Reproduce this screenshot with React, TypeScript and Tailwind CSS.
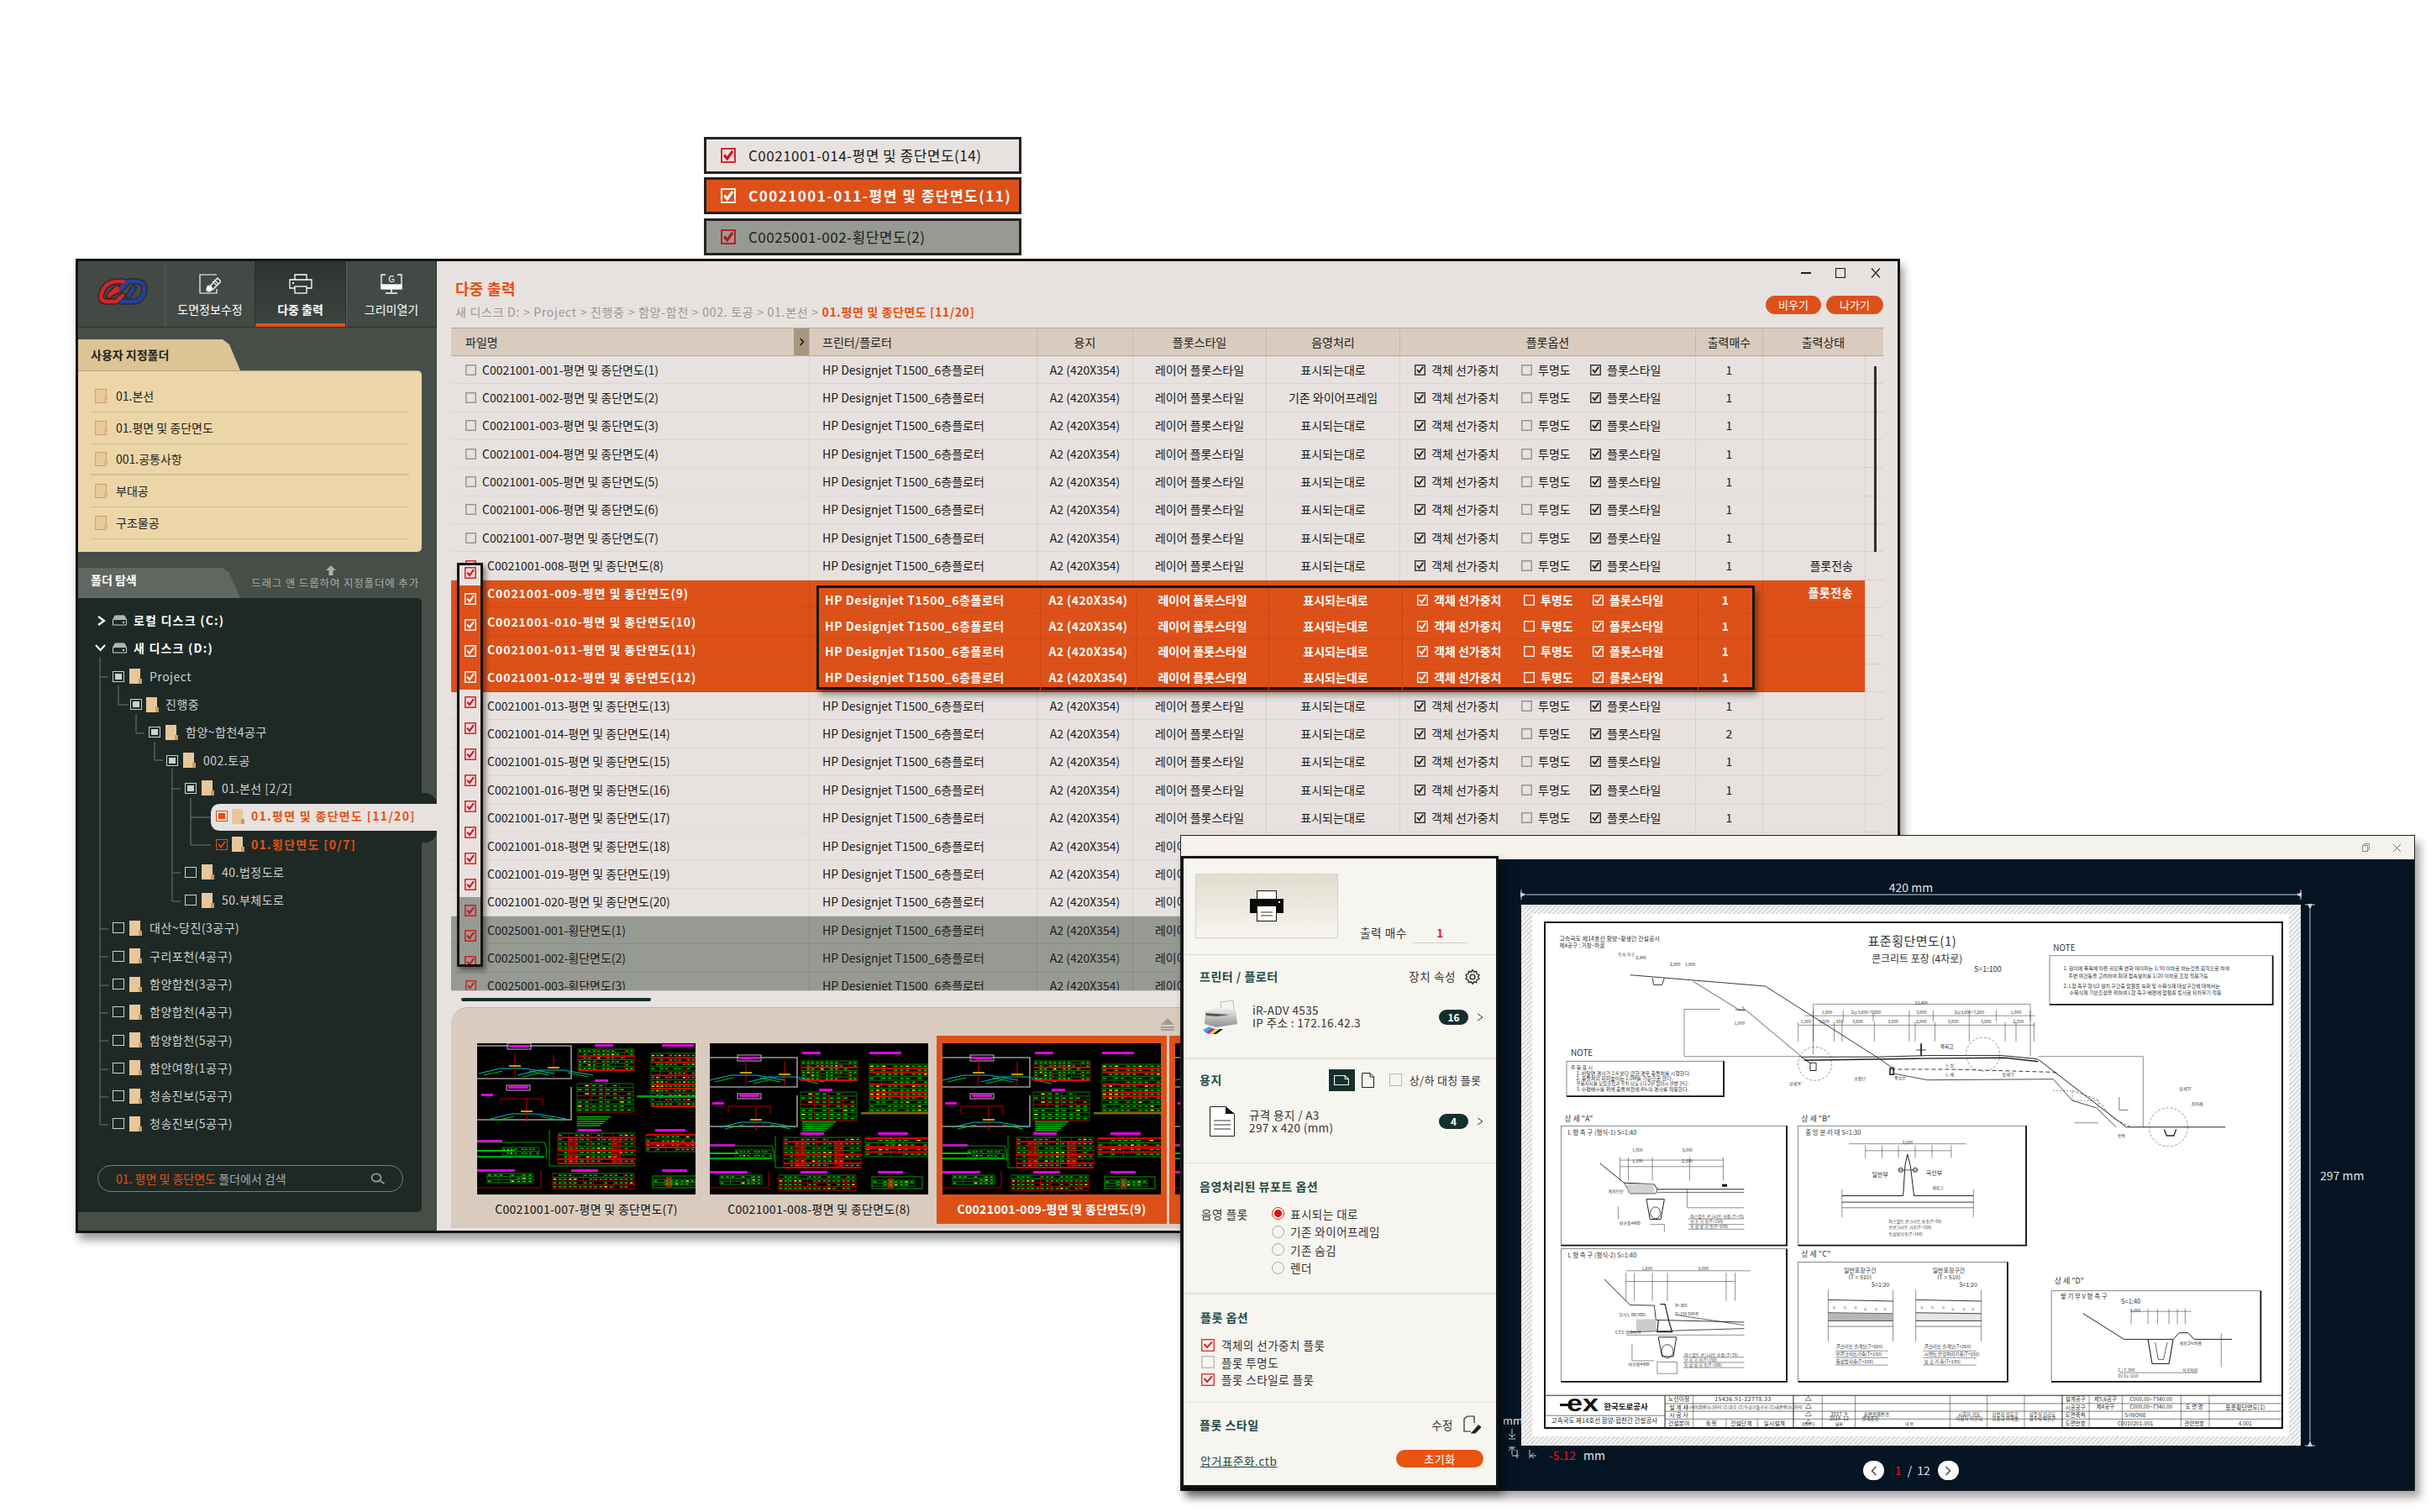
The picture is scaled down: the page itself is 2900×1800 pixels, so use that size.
import React from 'react';

const ORANGE = 'bg-[#dd5119]';

const pad3 = (n: number) => String(n).padStart(3, '0');
const rows = [
  ...Array.from({ length: 20 }, (_, i) => `C0021001-${pad3(i + 1)}-평면 및 종단면도(${i + 1})`),
  ...Array.from({ length: 3 }, (_, i) => `C0025001-${pad3(i + 1)}-횡단면도(${i + 1})`),
];

function Box({ on, color = '#222', off = '#8e8a86', size = 13, fill = 'none', sw = 1.5 }: { on?: boolean; color?: string; off?: string; size?: number; fill?: string; sw?: number }) {
  return (
    <svg width={size} height={size} viewBox="0 0 13 13" className="shrink-0">
      <rect x="0.75" y="0.75" width="11.5" height="11.5" fill={fill} stroke={on ? color : off} strokeWidth="1.3" />
      {on && <path d="M3 6.2 L5.6 9.3 L10.2 2.8" fill="none" stroke={color} strokeWidth={sw + 0.4} />}
    </svg>
  );
}

function Opts({ color, off, bold }: { color: string; off: string; bold?: boolean }) {
  return (
    <div className={`flex items-center ${bold ? 'font-bold' : ''}`}>
      <span className="flex w-[127px] items-center gap-[7px]"><Box on color={color} off={off} />객체 선가중치</span>
      <span className="flex w-[82px] items-center gap-[7px]"><Box color={color} off={off} />투명도</span>
      <span className="flex items-center gap-[7px]"><Box on color={color} off={off} />플롯스타일</span>
    </div>
  );
}

function TableRow({ i, name }: { i: number; name: string }) {
  const orange = i >= 8 && i <= 11;
  const grey = i >= 20;
  const underPreview = i >= 17;
  const bg = orange ? `${ORANGE} text-white border-[#cc4a15]` : grey ? 'bg-[#979a93] text-[#1a1a1a] border-[#8a8d86]' : 'text-[#1a1a1a] border-[#dad5d1]';
  const line = orange ? 'border-[#cc4a15]' : grey ? 'border-[#888b85]' : 'border-[#d6d0cb]';
  const shade = i === 1 ? '기존 와이어프레임' : '표시되는대로';
  const checked = i >= 7;
  return (
    <div className="flex h-[33.35px] items-center text-[14px]">
      <div className={`flex h-full w-[1683px] items-center border-b ${bg}`}>
        <div className={`flex h-full w-[426px] items-center pl-[17px] ${i >= 7 ? 'gap-[13px]' : 'gap-[7px]'} ${orange ? 'font-bold tracking-[0.9px]' : ''}`}>
          <Box on={checked} color="#d3121a" off="#8e8a86" />
          <span className="whitespace-nowrap">{name}</span>
        </div>
        <div className={`flex h-full w-[271px] items-center border-l pl-[15px] whitespace-nowrap ${line}`}>{!orange && 'HP Designjet T1500_6층플로터'}</div>
        <div className={`flex h-full w-[114px] items-center justify-center border-l ${line}`}>{!orange && 'A2 (420X354)'}</div>
        <div className={`flex h-full w-[159px] items-center justify-center border-l whitespace-nowrap ${line}`}>{!orange && '레이어 플롯스타일'}</div>
        <div className={`flex h-full w-[159px] items-center justify-center border-l ${line}`}>{!orange && !underPreview && shade}</div>
        <div className={`flex h-full w-[352px] items-center border-l pl-[17px] ${line}`}>{!orange && !underPreview && <Opts color="#222" off="#8e8a86" />}</div>
        <div className={`flex h-full w-[80px] items-center justify-center border-l ${line}`}>{!orange && !underPreview && (i === 13 ? 2 : 1)}</div>
        <div className={`flex h-full flex-1 items-center justify-end border-l pr-[14px] ${line}`}>
          {(i === 7 || i === 8) && <span className={i === 8 ? '-translate-y-[1px] font-bold tracking-[0.5px]' : ''}>플롯전송</span>}
        </div>
      </div>
      <div className="h-full flex-1 border-b border-l border-[#d6d0cb]" />
    </div>
  );
}

function Header() {
  const c = 'flex h-full items-center justify-center border-l border-[#c6b9ab]';
  return (
    <div className="flex h-[34px] items-center border-y border-[#b3a799] bg-[#d9ccbf] text-[14px] text-[#222]">
      <div className="flex h-full w-[426px] items-center justify-between pl-[17px]">
        <span>파일명</span>
        <span className="flex h-full w-[18px] items-center justify-center bg-[#a8967f]">
          <svg width="7" height="10" viewBox="0 0 7 10"><path d="M1.5 1 L5.5 5 L1.5 9" fill="none" stroke="#111" strokeWidth="1.5" /></svg>
        </span>
      </div>
      <div className={`${c} w-[271px] !justify-start pl-[15px]`}>프린터/플로터</div>
      <div className={`${c} w-[114px]`}>용지</div>
      <div className={`${c} w-[159px]`}>플롯스타일</div>
      <div className={`${c} w-[159px]`}>음영처리</div>
      <div className={`${c} w-[352px]`}>플롯옵션</div>
      <div className={`${c} w-[80px]`}>출력매수</div>
      <div className={`${c} flex-1`}>출력상태</div>
    </div>
  );
}

/* ---------- thumbnails ---------- */
function rnd(seed: number) {
  let s = seed;
  return () => {
    s = (s * 9301 + 49297) % 233280;
    return s / 233280;
  };
}
function Tbl({ x, y, w, h, cols, rws, seed, red = 0.3, thick }: { x: number; y: number; w: number; h: number; cols: number; rws: number; seed: number; red?: number; thick?: boolean }) {
  const r = rnd(seed);
  const els: React.ReactNode[] = [];
  for (let j = 0; j <= rws; j++) {
    const yy = y + (h * j) / rws;
    const isRed = r() < red;
    els.push(<line key={`h${j}`} x1={x} x2={x + w} y1={yy} y2={yy} stroke={isRed ? '#e00000' : '#00a800'} strokeWidth={isRed && thick ? 2 : 0.8} />);
    if (j < rws) {
      for (let k = 0; k < cols; k++) {
        const xx = x + (w * k) / cols + 1;
        if (r() < 0.72) els.push(<rect key={`d${j}-${k}`} x={xx} y={yy + (h / rws) * 0.35} width={(w / cols) * 0.55} height={1.4} fill={r() < 0.12 ? '#ffff00' : '#00e000'} />);
      }
    }
  }
  for (let k = 0; k <= cols; k += 2) {
    const xx = x + (w * k) / cols;
    els.push(<line key={`v${k}`} x1={xx} x2={xx} y1={y} y2={y + h} stroke={r() < red ? '#d00000' : '#008800'} strokeWidth={0.8} />);
  }
  return <g>{els}</g>;
}
function Mag({ x, y, w }: { x: number; y: number; w: number }) {
  return <rect x={x} y={y} width={w} height={3} fill="#e400e4" />;
}
function Section({ x, y }: { x: number; y: number }) {
  return (
    <g fill="none" strokeWidth="1">
      <path d={`M${x} ${y + 8} L${x + 25} ${y + 2} L${x + 55} ${y + 2} L${x + 90} ${y + 8}`} stroke="#00bcd4" />
      <path d={`M${x + 6} ${y + 10} L${x + 28} ${y + 5} M${x + 60} ${y + 5} L${x + 84} ${y + 10}`} stroke="#00c800" />
      <path d={`M${x + 43} ${y - 16} V${y + 12}`} stroke="#d00000" />
      <rect x={x + 36} y={y - 2} width={14} height={2} fill="#c8a000" stroke="none" />
    </g>
  );
}
function Thumb({ v }: { v: 0 | 1 }) {
  const a = v === 0;
  return (
    <svg width="260" height="180" viewBox="0 0 260 180" className="block shrink-0 bg-black">
      <path d={a ? 'M0 3 H112 V42 H0' : 'M0 17 H104 V52 H0'} fill="none" stroke="#9a9a9a" strokeWidth="1.6" />
      <rect x={a ? 36 : 33} y={a ? 0 : 14} width="28" height="7" fill="none" stroke="#bbb" />
      <Mag x={a ? 38 : 35} y={a ? 2 : 16} w={24} />
      <Section x={a ? 2 : 0} y={a ? 28 : 36} />
      <Section x={a ? 48 : 46} y={a ? 30 : 38} />
      <Mag x={a ? 140 : 110} y={a ? 1 : 10} w={22} />
      <Tbl x={a ? 120 : 109} y={a ? 7 : 21} w={67} h={a ? 25 : 23} cols={12} rws={6} seed={3} thick />
      <Mag x={a ? 220 : 190} y={a ? 1 : 10} w={38} />
      <Tbl x={a ? 207 : 190} y={a ? 12 : 25} w={a ? 53 : 71} h={a ? 63 : 57} cols={10} rws={12} seed={7} red={0.35} thick />
      <rect x={a ? 190 : 180} y={a ? 62 : 82} width="80" height="2.5" fill={a ? '#00a000' : '#707000'} />
      <Mag x={a ? 140 : 130} y={a ? 43 : 54} w={16} />
      <Tbl x={a ? 119 : 108} y={a ? 48 : 58} w={67} h={34} cols={8} rws={7} seed={11} red={0.4} />
      {[0, 1, 2, 3, 4].map((n) => <rect key={n} x={a ? 119 : 110} y={(a ? 87 : 93) + n * 2.6} width={40 - n * 3} height={1.4} fill="#00c000" />)}
      <path d={a ? 'M112 52 V91 H0' : 'M104 62 V99 H0'} fill="none" stroke="#9a9a9a" strokeWidth="1.6" />
      <rect x={a ? 35 : 33} y={a ? 50 : 60} width="28" height="6" fill="none" stroke="#bbb" />
      <Mag x={a ? 37 : 35} y={a ? 51 : 61} w={24} />
      <Mag x={a ? 5 : 3} y={a ? 60 : 70} w={14} />
      <path d={a ? 'M28 72 V66 H78 V75' : 'M22 83 V75 H72 V84'} fill="none" stroke="#b00000" />
      <Section x={a ? 16 : 12} y={a ? 82 : 92} />
      <Mag x={a ? 120 : 108} y={a ? 102 : 106} w={28} />
      <path d={a ? 'M86 103 V146 H189' : 'M78 110 V148 H173'} fill="none" stroke="#00a000" />
      <Tbl x={a ? 96 : 88} y={a ? 107 : 112} w={92} h={36} cols={14} rws={7} seed={19} red={0.5} thick />
      <rect x={a ? 108 : 102} y={a ? 112 : 116} width="12" height="32" fill="#e00000" opacity="0.55" />
      <rect x={a ? 160 : 148} y={a ? 112 : 116} width="12" height="32" fill="#e00000" opacity="0.55" />
      <Mag x={a ? 212 : 200} y={a ? 102 : 106} w={36} />
      <Tbl x={a ? 201 : 185} y={a ? 109 : 113} w={a ? 59 : 76} h={a ? 20 : 22} cols={10} rws={4} seed={23} red={0.5} thick />
      <rect x={a ? 201 : 185} y={a ? 117 : 122} width="76" height="4" fill="#e00000" opacity="0.8" />
      <Mag x={0} y={a ? 115 : 120} w={30} />
      <path d={a ? 'M0 118 H80 Q84 125 82 137' : 'M0 122 H74 Q78 130 76 140'} fill="none" stroke="#009000" strokeWidth="1.2" />
      <rect x="0" y={a ? 134 : 136} width={a ? 80 : 74} height="2.4" fill="#00a000" />
      <rect x="0" y={a ? 127 : 130} width={a ? 45 : 34} height="2" fill="#00c000" />
      <Tbl x={30} y={a ? 124 : 127} w={44} h={9} cols={10} rws={2} seed={31} red={0} />
      <Mag x={0} y={a ? 150 : 152} w={45} />
      <path d={a ? 'M0 172 H76 V151' : 'M0 172 H70 V152'} fill="none" stroke="#b00000" />
      <Tbl x={12} y={a ? 155 : 157} w={a ? 55 : 50} h={11} cols={8} rws={3} seed={37} red={0} />
      <Mag x={a ? 112 : 108} y={a ? 150 : 152} w={32} />
      <Tbl x={a ? 90 : 82} y={a ? 155 : 157} w={a ? 97 : 92} h={18} cols={16} rws={4} seed={41} red={0.4} />
      <Mag x={a ? 220 : 200} y={a ? 150 : 152} w={30} />
      <rect x={a ? 209 : 193} y={a ? 158 : 159} width="60" height="14" fill="none" stroke="#00a000" />
      <rect x={a ? 225 : 212} y={a ? 159 : 161} width="7" height="12" fill="#c00000" />
      <Tbl x={a ? 210 : 194} y={a ? 162 : 163} w={50} h={7} cols={8} rws={2} seed={43} red={0} />
    </svg>
  );
}

function Card({ label, sel, v }: { label?: string; sel?: boolean; v: 0 | 1 }) {
  return (
    <div className={`flex h-[224px] w-[274px] shrink-0 flex-col items-center pt-[9px] ${sel ? `${ORANGE} font-bold text-white` : 'text-[#111]'}`}>
      <Thumb v={v} />
      <div className="mt-[2px] flex h-[30px] items-center whitespace-nowrap text-[14px] tracking-[0.3px]">{label}</div>
    </div>
  );
}

/* ---------- sidebar ---------- */
function UserFolder() {
  return (
    <svg width="15" height="17" viewBox="0 0 15 17" className="shrink-0">
      <rect x="0.5" y="0.5" width="13" height="16" fill="#e8c99b" stroke="#cf9f6c" />
      <rect x="12" y="11" width="3" height="6" fill="#e8c99b" stroke="#cf9f6c" strokeWidth="0.8" />
    </svg>
  );
}
function TreeFolder() {
  return (
    <svg width="15" height="18" viewBox="0 0 15 18" className="shrink-0">
      <rect x="0" y="0" width="13" height="18" fill="#e7c79a" />
      <rect x="11" y="12" width="4" height="6" fill="#c99a62" />
    </svg>
  );
}
function TreeBox({ mode, orange }: { mode: 'partial' | 'none' | 'check'; orange?: boolean }) {
  const c = orange ? '#e8500f' : '#c9d2ce';
  return (
    <svg width="14" height="13" viewBox="0 0 14 13" className="shrink-0">
      <rect x="0.5" y="0.5" width="13" height="12" fill="none" stroke={c} strokeWidth="1" />
      {mode === 'partial' && <rect x="3" y="3" width="8" height="7" fill={c} />}
      {mode === 'check' && <path d="M3 6 L6 9.5 L11 3" fill="none" stroke={c} strokeWidth="1.6" />}
    </svg>
  );
}
const tree: { pl: string; gap: string; label: string; mode: 'partial' | 'none' | 'check'; orange?: boolean }[] = [
  { pl: 'pl-[41px]', gap: 'gap-[6px]', label: 'Project', mode: 'partial' },
  { pl: 'pl-[62px]', gap: 'gap-[5px]', label: '진행중', mode: 'partial' },
  { pl: 'pl-[84px]', gap: 'gap-[6px]', label: '함양~합천4공구', mode: 'partial' },
  { pl: 'pl-[105px]', gap: 'gap-[6px]', label: '002.토공', mode: 'partial' },
  { pl: 'pl-[127px]', gap: 'gap-[6px]', label: '01.본선 [2/2]', mode: 'partial' },
  { pl: 'pl-[164px]', gap: 'gap-[5px]', label: '01.평면 및 종단면도 [11/20]', mode: 'partial', orange: true },
  { pl: 'pl-[164px]', gap: 'gap-[5px]', label: '01.횡단면도 [0/7]', mode: 'check', orange: true },
  { pl: 'pl-[127px]', gap: 'gap-[6px]', label: '40.법정도로', mode: 'none' },
  { pl: 'pl-[127px]', gap: 'gap-[6px]', label: '50.부체도로', mode: 'none' },
  { pl: 'pl-[41px]', gap: 'gap-[6px]', label: '대산~당진(3공구)', mode: 'none' },
  { pl: 'pl-[41px]', gap: 'gap-[6px]', label: '구리포천(4공구)', mode: 'none' },
  { pl: 'pl-[41px]', gap: 'gap-[6px]', label: '함양합천(3공구)', mode: 'none' },
  { pl: 'pl-[41px]', gap: 'gap-[6px]', label: '함양합천(4공구)', mode: 'none' },
  { pl: 'pl-[41px]', gap: 'gap-[6px]', label: '함양합천(5공구)', mode: 'none' },
  { pl: 'pl-[41px]', gap: 'gap-[6px]', label: '함안여항(1공구)', mode: 'none' },
  { pl: 'pl-[41px]', gap: 'gap-[6px]', label: '청송진보(5공구)', mode: 'none' },
  { pl: 'pl-[41px]', gap: 'gap-[6px]', label: '청송진보(5공구)', mode: 'none' },
];

function Disk() {
  return (
    <svg width="17" height="13" viewBox="0 0 17 13" className="shrink-0">
      <path d="M3 1 H14 L16.5 6 V12 H0.5 V6 Z" fill="none" stroke="#cfd5d2" strokeWidth="1" />
      <path d="M3 1 H14 L16.5 6 H0.5 Z" fill="#aeb5b1" />
      <rect x="12" y="8" width="2" height="2" fill="#cfd5d2" />
    </svg>
  );
}

function Logo() {
  return (
    <svg width="62" height="34" viewBox="0 0 62 34">
      <g fill="none" strokeLinecap="round" strokeLinejoin="round">
        <path d="M24 13 L15 22 M31 22 L23 29 H12 Q3 29 6 19 Q10 6 24 5 H31 Q35 6 32 10 L27 15 L19 19" stroke="#2a2a2a" strokeWidth="7.5" />
        <path d="M29 29 H44 Q55 28 57 16 Q58 5 47 5 H38 L29 14 M44 13 L38 22" stroke="#2a2a2a" strokeWidth="7.5" />
        <path d="M24 13 L15 22 M31 22 L23 29 H12 Q3 29 6 19 Q10 6 24 5 H31 Q35 6 32 10 L27 15 L19 19" stroke="#d8232a" strokeWidth="4.6" />
        <path d="M29 29 H44 Q55 28 57 16 Q58 5 47 5 H38 L29 14 M44 13 L38 22" stroke="#24409c" strokeWidth="4.6" />
      </g>
    </svg>
  );
}

function NavTab({ label, active, children }: { label: string; active?: boolean; children: React.ReactNode }) {
  return (
    <div className={`relative flex w-[108px] flex-col items-center border-r border-[#2a2f2c] pt-[14px] ${active ? 'bg-gradient-to-b from-[#2c3330] to-[#3d4541] font-bold' : 'bg-[#434a46] border-l border-l-[#5a615c]'}`}>
      <div className="flex h-[26px] items-center justify-center">{children}</div>
      <div className="mt-[8px] text-[14px] leading-[18px] text-white">{label}</div>
      {active && <div className="absolute bottom-0 left-0 h-[4px] w-full bg-[#dd5119]" />}
    </div>
  );
}

function Sidebar() {
  return (
    <div className="flex w-[427px] shrink-0 flex-col bg-[#474d47]">
      <div className="flex h-[79px] border-b border-[#2e332f]">
        <div className="flex w-[103px] items-center justify-center bg-[#434a46] pb-[6px] pl-[2px]"><Logo /></div>
        <NavTab label="도면정보수정">
          <svg width="26" height="24" viewBox="0 0 26 24" fill="none" stroke="#fff" strokeWidth="1.2">
            <path d="M21 1 H1 V23 H21 V18" />
            <path d="M12 16 L22 5 L26 9 L16 19 Z" strokeWidth="1.3" />
            <path d="M10 15 Q13 13 15 16 Q16 20 12 21 Q9 21 9 18 Z" fill="#fff" />
            <path d="M16 9 L21 14 M18 7 L23 12" />
          </svg>
        </NavTab>
        <NavTab label="다중 출력" active>
          <svg width="28" height="24" viewBox="0 0 28 24" fill="none" stroke="#fff" strokeWidth="1.3">
            <path d="M7 7 V1 H21 V7" />
            <path d="M7 17 H1 V7 H27 V17 H21" />
            <rect x="7" y="15" width="14" height="8" />
            <rect x="4" y="10" width="2" height="2" fill="#fff" stroke="none" />
          </svg>
        </NavTab>
        <NavTab label="그리미열기">
          <svg width="26" height="24" viewBox="0 0 26 24" fill="none" stroke="#fff" strokeWidth="1.3">
            <path d="M6 1 H1 V17 H25 V1 H20" />
            <rect x="1" y="13" width="24" height="5" fill="#fff" />
            <path d="M13 18 V22 M6 23 H20" strokeWidth="1.5" />
            <text x="13" y="10" textAnchor="middle" fontSize="11" fill="#fff" stroke="none">G</text>
          </svg>
        </NavTab>
      </div>
      <div className="mt-[14px] flex h-[37px] w-[193px] items-center bg-[#dcc595] pl-[15px] text-[14px] font-bold text-[#222] [clip-path:polygon(0_0,172px_0,180px_6px,193px_100%,0_100%)]">사용자 지정폴더</div>
      <div className="mr-[18px] flex h-[216px] flex-col rounded-r-[5px] border-t border-[#b4a585] bg-[#ecd6a8] px-[15px] pt-[11px]">
        {['01.본선', '01.평면 및 종단면도', '001.공통사항', '부대공', '구조물공'].map((t, i) => (
          <div key={t} className={`flex h-[37.8px] items-center gap-[10px] border-[#d3bd92] pl-[5px] text-[14px] text-[#222] ${i === 2 ? 'border-b-2' : 'border-b'}`}>
            <UserFolder />
            <span>{t}</span>
          </div>
        ))}
      </div>
      <div className="mt-[19px] flex h-[36px]">
        <div className="flex h-[36px] w-[193px] items-center bg-[#606761] pb-[8px] pl-[15px] text-[14px] font-bold text-white [clip-path:polygon(0_0,172px_0,180px_6px,193px_100%,0_100%)]">폴더 탐색</div>
        <div className="flex w-[216px] -translate-y-[3px] flex-col items-end pr-[3px] text-[12.5px] leading-[15px] tracking-[0.85px] text-[#a9aeaa]">
          <svg width="12" height="12" viewBox="0 0 12 12" className="mr-[99px] mb-[1px]"><path d="M6 0 L12 6 H8.5 V12 H3.5 V6 H0 Z" fill="#a9aeaa" /></svg>
          <span className="whitespace-nowrap">드래그 앤 드롭하여 지정폴더에 추가</span>
        </div>
      </div>
      <div className="relative mr-[18px] h-[731px] rounded-r-[5px] bg-[#1e2926] pt-[10px] text-[14px]">
        <div className="absolute top-[232px] left-[400px] h-[59px] w-[27px] rounded-r-[14px] bg-[#1e2926]" />
        <div className="absolute top-[245px] left-[158px] h-[32px] w-[269px] rounded-l-[10px] bg-[#e7e2df]" />
        <svg className="absolute top-0 left-0" width="409" height="731" fill="none" stroke="#6d7672" strokeWidth="1">
          <path d="M26 70 V627 H36 M26 94 H36 M26 394 H36 M26 427 H36 M26 461 H36 M26 494 H36 M26 527 H36 M26 561 H36 M26 594 H36" />
          <path d="M48 104 V127 H60 M69 138 V161 H79 M91 171 V193 H101" />
          <path d="M112 203 V361 H122 M112 227 H122 M112 327 H122 M134 238 V294 H158 M134 261 H158" />
        </svg>
        <div className="relative flex h-[33.3px] items-center gap-[8px] pl-[22px] font-bold text-white">
          <svg width="11" height="12" viewBox="0 0 11 12"><path d="M2 1 L9 6 L2 11" fill="none" stroke="#fff" strokeWidth="2.2" /></svg>
          <Disk />
          <span className="tracking-[1.2px]">로컬 디스크 (C:)</span>
        </div>
        <div className="relative flex h-[33.3px] items-center gap-[8px] pl-[20px] font-bold text-white">
          <svg width="13" height="9" viewBox="0 0 13 9"><path d="M1 1 L6.5 7 L12 1" fill="none" stroke="#fff" strokeWidth="2" /></svg>
          <Disk />
          <span className="tracking-[1.2px]">새 디스크 (D:)</span>
        </div>
        {tree.map((t, i) => (
          <div key={i} className={`relative flex h-[33.3px] items-center ${t.pl} ${t.gap}`}>
            <TreeBox mode={t.mode} orange={t.orange} />
            <TreeFolder />
            <span className={`ml-[3px] whitespace-nowrap ${t.orange ? 'font-bold tracking-[1.3px] text-[#e8500f]' : 'tracking-[0.5px] text-[#cdd2cf]'}`}>{t.label}</span>
          </div>
        ))}
        <div className="absolute top-[675px] left-[23px] flex h-[32px] w-[364px] items-center justify-between rounded-full border border-[#75807c] pr-[20px] pl-[21px] text-[14px]">
          <span><span className="text-[#e8500f]">01. 평면 및 종단면도</span> <span className="text-[#a6aca9]">폴더에서 검색</span></span>
          <svg width="18" height="14" viewBox="0 0 18 14" fill="none" stroke="#8f9794" strokeWidth="1.8"><ellipse cx="7" cy="6" rx="5.5" ry="4.6" /><path d="M11 9.5 L16.5 13" /></svg>
        </div>
      </div>
    </div>
  );
}

/* ---------- main content ---------- */
function WinCtl({ cls = '' }: { cls?: string }) {
  return (
    <div className={`flex items-center ${cls}`}>
      <svg width="12" height="12" viewBox="0 0 12 12"><rect x="0" y="5" width="12" height="2" fill="#222" /></svg>
      <svg className="ml-[29px]" width="12" height="12" viewBox="0 0 12 12"><rect x="0.5" y="0.5" width="11" height="11" fill="none" stroke="#222" strokeWidth="1.2" /></svg>
      <svg className="ml-[30px]" width="12" height="12" viewBox="0 0 12 12"><path d="M1 0.5 L11 11.5 M11 0.5 L1 11.5" stroke="#222" strokeWidth="1.2" /></svg>
    </div>
  );
}

function Main() {
  return (
    <div className="relative flex flex-1 flex-col bg-[#e7e2df] pr-[17px] pl-[17px]">
      <div className="flex h-[79px]">
        <div className="flex flex-col pl-[5px]">
          <div className="pt-[21px] text-[18px] leading-[22px] font-bold tracking-[0.3px] text-[#e8500f]">다중 출력</div>
          <div className="mt-[7px] text-[14px] tracking-[0.72px] whitespace-nowrap text-[#9b9692]">새 디스크 D: &gt; Project &gt; 진행중 &gt; 함양-합천 &gt; 002. 토공 &gt; 01.본선 &gt; <span className="font-bold tracking-[0.6px] text-[#e8500f]">01.평면 및 종단면도 [11/20]</span></div>
        </div>
        <div className="ml-auto flex flex-col items-end">
          <WinCtl cls="mt-[8px] mr-[3px]" />
          <div className="mt-[21px] flex gap-[6px] text-[13px] text-white">
            <span className="flex h-[22px] w-[66px] items-center justify-center rounded-full bg-[#dd5119]">비우기</span>
            <span className="flex h-[22px] w-[68px] items-center justify-center rounded-full bg-[#dd5119]">나가기</span>
          </div>
        </div>
      </div>
      <div className="relative h-[789px] overflow-hidden">
        <Header />
        {rows.map((n, i) => <TableRow key={n} i={i} name={n} />)}
        <div className="absolute top-[46px] right-[8px] h-[221px] w-[3px] bg-[#2f2f2f]" />
      </div>
      <div className="flex h-[20px] items-center border-t border-[#cfc9c4] bg-[#e7e2df] pl-[12px]">
        <div className="h-[4px] w-[226px] rounded-full bg-[#14302c]" />
      </div>
      <div className="relative mb-[3px] flex flex-1 gap-[3px] overflow-hidden rounded-tl-[20px] border-t border-[#bdb5ac] bg-[#d9ccbf] pt-[33px] pl-[24px]">
        <Card label="C0021001-007-평면 및 종단면도(7)" v={0} />
        <Card label="C0021001-008-평면 및 종단면도(8)" v={1} />
        <Card label="C0021001-009-평면 및 종단면도(9)" v={1} sel />
        <Card v={1} sel />
        <svg className="absolute top-[12px] left-[845px]" width="16" height="15" viewBox="0 0 16 15"><path d="M8 0 L16 8 H0 Z M0 10 H16 V12 H0 Z M0 13 H16 V15 H0 Z" fill="#a29c94" /></svg>
      </div>
    </div>
  );
}

function Strip({ cls, text, boxColor, txt }: { cls: string; text: string; boxColor: string; txt: string }) {
  return (
    <div className={`absolute left-[838px] flex h-[44px] w-[378px] items-center gap-[15px] border-[3px] pl-[17px] text-[17px] whitespace-nowrap ${cls} ${txt}`}>
      <Box on color={boxColor} size={18} sw={2} />
      <span>{text}</span>
    </div>
  );
}

function CheckColumn() {
  const band = (i: number) => (i === 0 ? 'h-[24px] items-start pt-[2px] bg-[#e7e2df]' : i <= 4 ? `h-[31px] items-center ${ORANGE}` : i <= 12 ? 'h-[30.9px] items-center bg-[#e7e2df]' : 'h-[30.9px] items-center bg-[#979a93]');
  return (
    <div className="absolute top-[670px] left-[544px] h-[481px] w-[31px] overflow-hidden border-[3px] border-[#141414] shadow-[3px_4px_6px_rgba(0,0,0,0.45)]">
      {Array.from({ length: 16 }, (_, i) => (
        <div key={i} className={`flex justify-center ${band(i)}`}>
          <Box on color={i >= 1 && i <= 4 ? '#ffffff' : '#d3121a'} size={14} sw={1.6} />
        </div>
      ))}
    </div>
  );
}

function HighlightBox() {
  return (
    <div className={`absolute top-[697px] left-[972px] h-[124px] w-[1117px] border-[3px] border-[#141414] font-bold text-white shadow-[4px_6px_8px_rgba(0,0,0,0.4)] ${ORANGE}`}>
      {[0, 1, 2, 3].map((i) => (
        <div key={i} className="flex h-[30.4px] items-center border-b border-[#cc4a15] text-[14px] last:border-b-0">
          <div className="w-[263px] pl-[7px] tracking-[0.55px] whitespace-nowrap">HP Designjet T1500_6층플로터</div>
          <div className="flex h-full w-[114px] items-center justify-center border-l border-[#c44613] tracking-[0.4px]">A2 (420X354)</div>
          <div className="flex h-full w-[158px] items-center justify-center border-l border-[#c44613]">레이어 플롯스타일</div>
          <div className="flex h-full w-[159px] items-center justify-center border-l border-[#c44613]">표시되는대로</div>
          <div className="flex h-full w-[352px] items-center border-l border-[#c44613] pl-[17px]">
            <Opts color="#fff" off="#fff" bold />
          </div>
          <div className="flex h-full flex-1 items-center justify-center border-l border-[#c44613]">1</div>
        </div>
      ))}
    </div>
  );
}

/* ---------- print panel ---------- */
function SecTitle({ children }: { children: React.ReactNode }) {
  return <span className="shrink-0 text-[14px] font-bold tracking-[0.5px] whitespace-nowrap text-[#1f4a44]">{children}</span>;
}
function Badge({ n }: { n: string }) {
  return (
    <div className="flex items-center gap-[10px]">
      <span className="flex h-[18px] w-[35px] items-center justify-center rounded-full bg-[#14302c] text-[12px] font-bold text-white">{n}</span>
      <svg width="8" height="10" viewBox="0 0 8 10"><path d="M1 1 L7 5 L1 9" fill="none" stroke="#333" strokeWidth="1" /></svg>
    </div>
  );
}
function Radio({ on, label }: { on?: boolean; label: string }) {
  return (
    <div className="flex h-[21.5px] items-center gap-[7px]">
      <span className={`flex h-[15px] w-[15px] items-center justify-center rounded-full border ${on ? 'border-[#e02020]' : 'border-[#a8a8a4]'}`}>
        {on && <span className="h-[9px] w-[9px] rounded-full bg-[#e01010]" />}
      </span>
      <span>{label}</span>
    </div>
  );
}
function PanelCheck({ on, label }: { on?: boolean; label: string }) {
  return (
    <div className="flex h-[20.5px] items-center gap-[8px]">
      <svg width="16" height="15" viewBox="0 0 16 15" className="shrink-0">
        <rect x="0.75" y="0.75" width="14.5" height="13.5" fill="none" stroke={on ? '#e02020' : '#b5b5b0'} strokeWidth="1.3" />
        {on && <path d="M3.5 6 L7 10 L13 3.5" fill="none" stroke="#e02020" strokeWidth="2" />}
      </svg>
      <span>{label}</span>
    </div>
  );
}
function PrintPanel() {
  return (
    <div className="absolute top-[1019px] left-[1406px] flex h-[752px] w-[378px] flex-col border-[3px] border-[#141414] bg-[#f7f5f0] text-[13.5px] text-[#333] shadow-[6px_8px_10px_rgba(0,0,0,0.45)]">
      <div className="flex h-[115px] items-start border-b border-[#dedad3] pt-[18px] pl-[14px]">
        <div className="flex h-[77px] w-[170px] items-center justify-center border border-[#d4d0c7] bg-gradient-to-b from-[#e2dccf] to-[#f7f5f0]">
          <svg width="40" height="37" viewBox="0 0 40 37">
            <rect x="8.5" y="0.5" width="23" height="12" fill="#fff" stroke="#111" />
            <rect x="0" y="10" width="40" height="17" fill="#0a0a0a" />
            <rect x="34" y="13" width="2" height="2" fill="#fff" />
            <rect x="8.5" y="18.5" width="23" height="18" fill="#fff" stroke="#111" />
            <path d="M13 26 H27 M13 30 H27" stroke="#333" strokeWidth="1" />
          </svg>
        </div>
        <div className="mt-[58px] ml-[26px] flex items-center">
          <span className="tracking-[0.6px]">출력 매수</span>
          <span className="ml-[7px] flex h-[25px] w-[65px] items-center justify-center border-b border-[#cfcbc4] font-bold text-[#e01b1b]">1</span>
        </div>
      </div>
      <div className="flex h-[124px] flex-col border-b-2 border-[#e3dfd6] pt-[15px] pr-[15px] pl-[19px]">
        <div className="flex items-center justify-between">
          <SecTitle>프린터 / 플로터</SecTitle>
          <span className="flex items-center gap-[10px] pr-[3px] tracking-[0.6px]">장치 속성
            <svg width="20" height="20" viewBox="0 0 24 24" fill="none" stroke="#222" strokeWidth="1.6"><path d="M12 2 L14 5 L17.5 4 L18 7.5 L21.5 9 L20 12 L21.5 15 L18 16.5 L17.5 20 L14 19 L12 22 L10 19 L6.5 20 L6 16.5 L2.5 15 L4 12 L2.5 9 L6 7.5 L6.5 4 L10 5 Z" /><circle cx="12" cy="12" r="3.5" /></svg>
          </span>
        </div>
        <div className="mt-[16px] flex items-center pl-[4px]">
          <svg width="42" height="42" viewBox="0 0 42 42" className="shrink-0">
            <defs><linearGradient id="pg" x1="0" y1="0" x2="0" y2="1"><stop offset="0" stopColor="#f0f0f0" /><stop offset="1" stopColor="#8f8f8f" /></linearGradient></defs>
            <path d="M21 4 L36 2 L37 14 L22 16 Z" fill="#f5f5f5" stroke="#bdbdbd" />
            <path d="M3 15 L18 11 L39 13 L41 30 L16 34 L2 30 Z" fill="url(#pg)" />
            <path d="M3 17 L32 19 L17 21 L4 20 Z" fill="#555" />
            <path d="M0 37 L8 33 L11 35 L3 40 Z" fill="#17b8d8" />
            <path d="M3 40 L11 35 L15 36 L7 42 Z" fill="#d8149b" />
            <path d="M7 42 L15 36 L20 36 L12 42 Z" fill="#f2dc10" />
            <path d="M12 42 L20 36 L24 36 L16 42 Z" fill="#111" />
          </svg>
          <div className="ml-[17px] leading-[15px] tracking-[0.4px]"><div>iR-ADV 4535</div><div>IP 주소 : 172.16.42.3</div></div>
          <div className="ml-auto pt-[1px]"><Badge n="16" /></div>
        </div>
      </div>
      <div className="flex h-[124px] flex-col border-b border-[#e3dfd6] pt-[11px] pr-[15px] pl-[19px]">
        <div className="flex h-[27px] items-center">
          <SecTitle>용지</SecTitle>
          <span className="ml-[127px] flex h-[26px] w-[31px] shrink-0 items-center justify-center bg-[#14302c]">
            <svg width="18" height="12" viewBox="0 0 18 12"><path d="M0.5 0.5 H13 L17.5 4.5 V11.5 H0.5 Z" fill="none" stroke="#f7f5f0" strokeWidth="1.2" /><path d="M13 0.5 V4.5 H17.5" fill="none" stroke="#f7f5f0" /></svg>
          </span>
          <svg className="ml-[8px] shrink-0" width="15" height="18" viewBox="0 0 15 18"><path d="M0.5 0.5 H10 L14.5 5 V17.5 H0.5 Z M10 0.5 V5 H14.5" fill="none" stroke="#222" /></svg>
          <span className="ml-[18px] h-[15px] w-[15px] shrink-0 border border-[#b5b5b0]" />
          <span className="ml-[9px] text-[13px] tracking-[0.3px] whitespace-nowrap">상/하 대칭 플롯</span>
        </div>
        <div className="mt-[18px] flex items-center pl-[12px]">
          <svg width="30" height="36" viewBox="0 0 30 36" className="shrink-0">
            <path d="M0.5 0.5 H19 L29.5 9 V35.5 H0.5 Z" fill="#fff" stroke="#222" />
            <path d="M19 0.5 L29.5 9 H19 Z" fill="#111" />
            <path d="M5 17 H25 M5 22 H25 M5 27 H25" stroke="#333" />
          </svg>
          <div className="ml-[17px] leading-[15.5px] tracking-[0.4px]"><div>규격 용지 / A3</div><div>297 x 420 (mm)</div></div>
          <div className="ml-auto"><Badge n="4" /></div>
        </div>
      </div>
      <div className="flex h-[156px] flex-col border-b-2 border-[#e3dfd6] px-[19px] pt-[17px]">
        <SecTitle>음영처리된 뷰포트 옵션</SecTitle>
        <div className="mt-[11px] flex">
          <span className="ml-[2px] w-[84px] pt-[1px] tracking-[0.6px]">음영 플롯</span>
          <div className="tracking-[0.5px]">
            <Radio on label="표시되는 대로" />
            <Radio label="기존 와이어프레임" />
            <Radio label="기존 숨김" />
            <Radio label="렌더" />
          </div>
        </div>
      </div>
      <div className="flex h-[129px] flex-col border-b border-[#e3dfd6] pt-[17px] pl-[20px] tracking-[0.5px]">
        <SecTitle>플롯 옵션</SecTitle>
        <div className="mt-[12px] ml-[1px]">
          <PanelCheck on label="객체의 선가중치 플롯" />
          <PanelCheck label="플롯 투명도" />
          <PanelCheck on label="플롯 스타일로 플롯" />
        </div>
      </div>
      <div className="flex flex-1 flex-col pt-[15px] pr-[15px] pl-[19px]">
        <div className="flex items-center justify-between pr-[3px]">
          <SecTitle>플롯 스타일</SecTitle>
          <span className="flex items-center gap-[11px] tracking-[0.5px]">수정
            <svg width="22" height="22" viewBox="0 0 22 22" fill="none" stroke="#222" strokeWidth="1.2"><path d="M10 19 H2 V4 L6 1 H14 V9" /><path d="M13 19 L19 12 L22 14 L15 21 L11 21 Z" fill="#222" /></svg>
          </span>
        </div>
        <div className="mt-[19px] flex items-center justify-between pl-[1px]">
          <span className="translate-y-[3px] text-[13.5px] tracking-[0.6px] text-[#1f4a44] underline">압거표준화.ctb</span>
          <span className="flex h-[21px] w-[104px] items-center justify-center rounded-full bg-[#e8540f] text-[13px] tracking-[0.5px] text-white">초기화</span>
        </div>
      </div>
    </div>
  );
}

/* ---------- preview ---------- */
const X = (z: number) => 1780 + z / 1.4;
const Y = (z: number) => 1000 + z / 1.96;
const pts = (a: number[]) => {
  let s = '';
  for (let i = 0; i < a.length; i += 2) s += `${i === 0 ? 'M' : 'L'}${X(a[i]).toFixed(1)} ${Y(a[i + 1]).toFixed(1)} `;
  return s;
};
function L({ p, w = 0.8, c = '#222', dash, fill = 'none' }: { p: number[]; w?: number; c?: string; dash?: string; fill?: string }) {
  return <path d={pts(p)} fill={fill} stroke={c} strokeWidth={w} strokeDasharray={dash} />;
}
function T({ x, y, s, size = 6, anchor = 'start', w, c = '#333', sp }: { x: number; y: number; s: string; size?: number; anchor?: 'start' | 'middle' | 'end'; w?: number; c?: string; sp?: number }) {
  return <text x={X(x)} y={Y(y) + size * 0.35} fontSize={size} textAnchor={anchor} fontWeight={w} fill={c} letterSpacing={sp}>{s}</text>;
}
function PBox({ x, y, x2, y2 }: { x: number; y: number; x2: number; y2: number }) {
  return (
    <g>
      <rect x={X(x)} y={Y(y)} width={(x2 - x) / 1.4} height={(y2 - y) / 1.96} fill="#fff" stroke="#555" strokeWidth="0.7" />
      <path d={pts([x2, y, x2, y2, x, y2])} fill="none" stroke="#111" strokeWidth="1.8" />
    </g>
  );
}
function Circle({ x, y, r }: { x: number; y: number; r: number }) {
  return <circle cx={X(x)} cy={Y(y)} r={r} fill="none" stroke="#555" strokeWidth="0.6" strokeDasharray="3 2" />;
}

function Drawing() {
  const ticks432 = [505, 530, 565, 578, 632, 690, 700, 733, 790, 850, 868, 898];
  const ticks403 = [530, 580, 630, 690, 730, 790, 835, 892];
  return (
    <g>
      <L p={[225, 315, 450, 341, 640, 510, 662, 532]} w={0.9} />
      <L p={[330, 330, 405, 395, 418, 397, 510, 505]} w={0.7} />
      <L p={[510, 506, 640, 506, 720, 503, 845, 503, 897, 510, 905, 512, 1052, 670, 1217, 670]} w={1} />
      <L p={[515, 514, 700, 510, 850, 508, 905, 517]} w={1.4} />
      <L p={[660, 535, 760, 535, 935, 542]} w={0.9} dash="5 3" />
      <L p={[665, 545, 720, 560, 930, 558, 962, 608, 1002, 625, 1035, 670]} w={0.8} />
      <L p={[962, 585, 1002, 605, 1030, 650, 1060, 670]} w={0.6} dash="3 2" />
      <L p={[262, 322, 264, 338, 278, 338, 282, 322]} w={0.9} />
      <L p={[400, 395, 404, 397, 416, 397, 412, 388]} w={0.7} />
      <L p={[510, 506, 524, 520, 535, 520, 535, 538, 525, 538, 525, 520]} w={1} />
      <L p={[658, 532, 658, 547, 664, 547, 664, 532, 658, 532]} w={1.8} c="#333" />
      <L p={[1115, 675, 1119, 690, 1131, 690, 1135, 675]} w={1.3} />
      <L p={[710, 475, 710, 503]} w={1.8} />
      <L p={[702, 490, 718, 490]} w={0.9} />
      <Circle x={533} y={522} r={20} />
      <Circle x={813} y={500} r={20} />
      <Circle x={1122} y={670} r={23} />
      <L p={[530, 383, 892, 383]} w={0.5} />
      <L p={[515, 410, 900, 410]} w={0.5} />
      <L p={[505, 432, 900, 432]} w={0.5} />
      {ticks432.map((t) => <L key={t} p={[t, 425, t, 470]} w={0.5} />)}
      {ticks403.map((t) => <L key={t} p={[t, 398, t, 424]} w={0.5} />)}
      <L p={[530, 383, 530, 500]} w={0.5} />
      <L p={[892, 383, 892, 505]} w={0.5} />
      <L p={[315, 395, 375, 395]} w={0.5} />
      <L p={[315, 505, 510, 505]} w={0.5} />
      <L p={[315, 395, 315, 505]} w={0.5} />
      <L p={[1080, 505, 905, 505]} w={0.5} />
      <L p={[1080, 505, 1080, 670]} w={0.5} />
      <L p={[1040, 600, 1040, 630, 1055, 630]} w={0.6} />
      <L p={[930, 585, 962, 585, 962, 608, 1005, 608, 1005, 630]} w={0.5} dash="2 2" />
      <L p={[965, 660, 1005, 660]} w={0.5} />
      <T x={710} y={380} s="23,400" anchor="middle" size={5} />
      {[[553, '1,600'], [618, '2@3,600=7,200'], [710, '3,000'], [790, '2@3,600=7,200'], [868, '1,600']].map(([a, b]) => <T key={String(b) + a} x={a as number} y={403} s={b as string} anchor="middle" size={5} />)}
      {[[518, '1,500'], [548, '3,600'], [574, '500'], [604, '3,600'], [663, '3,600'], [710, '2,000'], [763, '3,600'], [818, '3,600'], [872, '2,500']].map(([a, b]) => <T key={String(b) + a} x={a as number} y={424} s={b as string} anchor="middle" size={5} />)}
      <T x={243} y={275} s="2,440" anchor="middle" size={5} />
      <T x={300} y={290} s="2,000" anchor="middle" size={5} />
      <T x={325} y={290} s="1,000" anchor="middle" size={5} />
      <T x={205} y={268} s="토사 측구" size={5} />
      <T x={407} y={427} s="1,000" anchor="middle" size={5} />
      <T x={741} y={481} s="계획고" size={6} />
      <T x={750} y={526} s="노 상" size={5} />
      <T x={750} y={547} s="노 체" size={5} />
      <T x={845} y={547} s="상세'C'" size={5} />
      <T x={598} y={558} s="포장단" size={5} />
      <T x={665} y={555} s="중심선" size={5} />
      <T x={490} y={568} s="상세'A'" size={5} />
      <T x={1140} y={580} s="상세'D'" size={5} />
      <T x={1160} y={616} s="길어깨" size={5} />
      <T x={1037} y={690} s="옹벽" size={5} />
      <T x={695} y={236} s="표준횡단면도(1)" size={15} anchor="middle" sp={0.5} />
      <T x={703} y={278} s="콘크리트 포장 (4차로)" size={12} anchor="middle" />
      <T x={798} y={302} s="S=1:100" size={9} />
      <T x={107} y={230} s="고속국도 제14호선 함양~황생간 건설공사" size={7} />
      <T x={107} y={247} s="제4공구 : 거창~하굴" size={6.5} />
      <T x={930} y={252} s="NOTE" size={10} />
      <PBox x={924} y={270} x2={1296} y2={384} />
      <T x={947} y={300} s="1. 길이에 폭육에 따른 횡단폭 변화 테이퍼는 1/30 이하로 하는것을 원칙으로 하여" size={6} />
      <T x={955} y={317} s="주변 여건등을 고려하여 최대 접속설치를 1/20 이하로 조정 적용가능" size={6} />
      <T x={947} y={341} s="2. L형 측구 형식2 설치 구간중 암절토 녹화 및 수목식재 대상구간에 대해서는" size={6} />
      <T x={957} y={357} s="수목식재 기반조성을 위하여 L합 측구 배면에 암절죄 토사로 되차우기 적용" size={6} />
      <T x={126} y={497} s="NOTE" size={10} />
      <PBox x={119} y={516} x2={381} y2={598} />
      <T x={126} y={530} s="주 등 표 시" size={6} />
      <T x={135} y={544} s="1. 비탈면 경사가 1:4 보다 급한 경우 충돌처를 시행한다." size={6} />
      <T x={135} y={556} s="2. 충돌처의 회피높이는 1.0M를 기준으로 한다." size={6} />
      <T x={135} y={568} s="무붕지지를 모임골접과 우치 되도 단1:2만 없이시 센병 한다." size={5.5} />
      <T x={135} y={581} s="3. 수평배수를 위해 충돌처전에 4%의 경사를 적용한다." size={6} />
      <T x={115} y={650} s={'상 세 "A"'} size={9} />
      <PBox x={110} y={667} x2={486} y2={946} />
      <T x={121} y={682} s="L 형 측 구 (형식-1)    S=1:40" size={7.5} />
      <L p={[208, 747, 380, 747]} w={0.5} />
      <L p={[208, 762, 380, 762]} w={0.5} />
      {[208, 262, 380, 222, 324].map((t) => <L key={t} p={[t, 740, t, 795]} w={0.5} />)}
      <T x={237} y={723} s="1,500" size={5} anchor="middle" />
      <T x={320} y={723} s="3,000" size={5} anchor="middle" />
      <T x={237} y={749} s="1,100" size={5} anchor="middle" />
      <T x={320} y={749} s="2,500" size={5} anchor="middle" />
      <L p={[175, 755, 215, 800, 265, 803, 270, 815, 415, 815]} w={1} />
      <L p={[215, 800, 225, 825, 268, 825, 270, 815]} w={0.8} />
      <rect x={X(220)} y={Y(802)} width={32} height={11} fill="#bbb" opacity="0.65" />
      <L p={[270, 822, 415, 822]} w={0.7} />
      <L p={[320, 815, 320, 858, 415, 858]} w={0.5} />
      <L p={[252, 838, 258, 885, 276, 885, 282, 838, 252, 838]} w={1} />
      <ellipse cx={X(267)} cy={Y(870)} rx={6} ry={7} fill="none" stroke="#222" strokeWidth="0.8" />
      <rect x={X(378)} y={Y(803)} width={6} height={3} fill="#111" />
      <L p={[205, 855, 205, 885]} w={0.5} />
      <L p={[258, 897, 282, 897, 282, 915]} w={0.5} />
      {[878, 891, 902].map((y) => <L key={y} p={[322, y + 6, 415, y + 6]} w={0.5} />)}
      <T x={325} y={878} s="아스팔트 콘크리트 포장 (T=15)" size={5} />
      <T x={325} y={891} s="보 조 기 층(T=150)" size={5} />
      <T x={325} y={902} s="동 상 방 지 층(T=100)" size={5} />
      <T x={188} y={820} s="계획모선" size={5} />
      <T x={207} y={895} s="비포장4400" size={5} />
      <T x={510} y={650} s={'상 세 "B"'} size={9} />
      <PBox x={505} y={667} x2={885} y2={946} />
      <T x={517} y={682} s="중 앙 분 리 대  S=1:30" size={7.5} />
      <T x={687} y={706} s="3,000" size={5} anchor="middle" />
      <L p={[590, 709, 785, 709]} w={0.5} />
      <L p={[617, 725, 760, 725]} w={0.5} />
      {[617, 645, 672, 700, 728, 760].map((t) => <L key={t} p={[t, 712, t, 742]} w={0.5} />)}
      <L p={[578, 830, 680, 830, 683, 760, 687, 733, 692, 760, 698, 830, 797, 830]} w={1} />
      <L p={[578, 845, 797, 845]} w={0.9} />
      <L p={[578, 858, 797, 858]} w={0.6} />
      <L p={[578, 815, 578, 880]} w={0.5} />
      <L p={[797, 815, 797, 880]} w={0.5} />
      <L p={[672, 770, 703, 770]} w={0.7} />
      <circle cx={X(676)} cy={Y(770)} r="2.5" fill="none" stroke="#222" />
      <circle cx={X(700)} cy={Y(770)} r="2.5" fill="none" stroke="#222" />
      <T x={628} y={781} s="일반부" size={7} />
      <T x={718} y={777} s="곡선부" size={7} />
      <T x={728} y={811} s="계획고" size={5} />
      <T x={656} y={891} s="아스팔트 콘크리트 표층(T=50)" size={5} />
      <T x={656} y={905} s="린콘크리트 기층(T=150)" size={5} />
      <T x={656} y={919} s="동상방지층(T=100)" size={5} />
      <PBox x={110} y={954} x2={486} y2={1264} />
      <T x={121} y={968} s="L 형 측 구 (형식-2)    S=1:40" size={7.5} />
      <T x={253} y={1000} s="1,200" size={5} anchor="middle" />
      <T x={347} y={1000} s="3,000" size={5} anchor="middle" />
      <L p={[218, 1005, 425, 1005]} w={0.5} />
      <L p={[218, 1030, 400, 1030]} w={0.5} />
      {[218, 232, 262, 287, 385, 400].map((t) => <L key={t} p={[t, 1010, t, 1075]} w={0.5} />)}
      <L p={[182, 1025, 225, 1085, 265, 1086, 268, 1120, 415, 1125]} w={0.9} />
      <L p={[275, 1083, 283, 1083, 290, 1125, 295, 1148, 270, 1148, 272, 1120]} w={1.2} />
      <L p={[300, 1108, 415, 1132]} w={0.7} />
      <L p={[225, 1148, 415, 1140]} w={0.8} />
      <L p={[218, 1155, 415, 1155]} w={0.5} />
      <L p={[272, 1160, 278, 1205, 297, 1205, 302, 1160, 272, 1160]} w={1} />
      <ellipse cx={X(287)} cy={Y(1193)} rx={7} ry={8} fill="none" stroke="#222" strokeWidth="0.8" />
      <rect x={X(235)} y={Y(1118)} width={24} height={14} fill="#aaa" opacity="0.6" />
      <L p={[228, 1175, 228, 1215, 265, 1215]} w={0.5} />
      <L p={[270, 1218, 303, 1218, 303, 1245, 270, 1245, 270, 1218]} w={0.5} />
      {[1207, 1219, 1231].map((y) => <L key={y} p={[313, y, 415, y]} w={0.5} />)}
      <T x={315} y={1202} s="아스팔트 콘크리트 포장 (T=70)" size={5} />
      <T x={315} y={1214} s="보 조 기 층(T=150)" size={5} />
      <T x={315} y={1226} s="동 상 방 지 층(T=100)" size={5} />
      <T x={222} y={1223} s="비포장4400" size={5} />
      <T x={206} y={1108} s="무기노 00(300)" size={5} />
      <T x={200} y={1150} s="C.T.C 300M/M" size={5} />
      <T x={300} y={1087} s="R=360" size={5} />
      <T x={300} y={1105} s="T=150 500폭" size={5} />
      <T x={510} y={966} s={'상 세 "C"'} size={9} />
      <PBox x={505} y={985} x2={854} y2={1264} />
      <T x={608} y={1005} s="일반포장구간" size={7} anchor="middle" />
      <T x={608} y={1021} s="(T = 510)" size={7} anchor="middle" />
      <T x={627} y={1037} s="S=1:20" size={7} />
      <T x={756} y={1005} s="일반포장구간" size={7} anchor="middle" />
      <T x={756} y={1021} s="(T = 510)" size={7} anchor="middle" />
      <T x={773} y={1037} s="S=1:20" size={7} />
      {[[555, 663], [701, 810]].map(([a, b], i) => (
        <g key={i}>
          <L p={[a, 1050, a, 1170]} w={0.5} />
          <L p={[b, 1050, b, 1170]} w={0.5} />
          <L p={[a, 1073, b, 1076]} w={0.9} />
          <L p={[a, 1103, b, 1105]} w={0.9} />
          <L p={[a, 1122, b, 1122]} w={0.9} />
          <L p={[a, 1135, b, 1135]} w={0.6} />
          <rect x={X(a)} y={Y(1104)} width={(b - a) / 1.4} height={9} fill="#999" opacity={i === 0 ? 0.7 : 0.25} />
          {[10, 28, 46, 62, 80, 95].map((d) => <circle key={d} cx={X(a + d)} cy={Y(1087 + (d % 3) * 4)} r="1.1" fill="none" stroke="#555" strokeWidth="0.5" />)}
          {[1192, 1208, 1225].map((y) => <L key={y} p={[a + 12, y, b - 8, y]} w={0.5} />)}
        </g>
      ))}
      <T x={568} y={1183} s="콘크리트 슬래브(T=260)" size={5.5} />
      <T x={568} y={1200} s="빈콘크리트기층(T=150)" size={5.5} />
      <T x={568} y={1218} s="동상방지층(T=100)" size={5.5} />
      <T x={715} y={1183} s="콘크리트 슬래브(T=260)" size={5.5} />
      <T x={715} y={1200} s="시멘트 안정처리기층(T=150)" size={5.5} />
      <T x={715} y={1218} s="보 조 기 층(T=100)" size={5.5} />
      <T x={932} y={1029} s={'상 세 "D"'} size={9} />
      <PBox x={927} y={1052} x2={1276} y2={1264} />
      <T x={942} y={1065} s="쌓 기 부 V 형 측 구" size={7.5} />
      <T x={1043} y={1077} s="S=1:40" size={7.5} />
      <L p={[980, 1105, 1048, 1165, 1130, 1165, 1140, 1150, 1155, 1150, 1165, 1165, 1228, 1165]} w={1} />
      <L p={[1088, 1165, 1095, 1222, 1123, 1222, 1130, 1165]} w={1.1} />
      <L p={[1100, 1172, 1105, 1212, 1114, 1212, 1120, 1172]} w={0.7} />
      <L p={[1060, 1100, 1160, 1100]} w={0.5} />
      {[1060, 1088, 1104, 1123, 1137, 1150].map((t) => <L key={t} p={[t, 1094, t, 1130]} w={0.5} />)}
      <L p={[1040, 1243, 1170, 1243]} w={0.5} />
      <L p={[1210, 1150, 1210, 1230]} w={0.5} />
      <T x={1067} y={1098} s="1,000" size={5} anchor="middle" />
      <T x={1038} y={1237} s="C / C 300" size={5} />
      <T x={1038} y={1250} s="D13 L=210" size={5} />
      <T x={1140} y={1174} s="계획 2%여름" size={5} />
      <T x={1145} y={1238} s="석공처림" size={5} />
      <L p={[82, 1296, 1312, 1296]} w={1} />
      <L p={[82, 1343, 283, 1343]} w={0.6} />
      {[1315, 1333, 1351].map((y) => <L key={y} p={[283, y, 1312, y]} w={0.6} />)}
      {[283, 330, 497, 545, 600, 758, 820, 882, 945, 990, 1045, 1143, 1190].map((t) => <L key={t} p={[t, 1296, t, 1372]} w={t === 283 || t === 497 || t === 945 ? 1 : 0.5} />)}
      <rect x="1857" y="1671" width="11" height="3" fill="#111" />
      <text x="1865" y="1680" fontSize="27" fontWeight="700" fontFamily="'Liberation Sans',sans-serif" fill="#111" textLength="38" lengthAdjust="spacingAndGlyphs">ex</text>
      <T x={181} y={1323} s="한국도로공사" size={9.5} w={700} c="#111" />
      <T x={182} y={1355} s="고속국도 제14호선 함양-합천간 건설공사" size={7.5} anchor="middle" c="#222" />
      {[['노선이정', 1305], ['설 계 사', 1324], ['시 공 사', 1342], ['건설분야', 1361]].map(([a, b]) => <T key={a as string} x={306} y={b as number} s={a as string} anchor="middle" size={7} />)}
      <T x={413} y={1304} s="15436.91-22778.33" anchor="middle" size={7} sp={0.4} />
      <T x={413} y={1323} s="(주)케이엠엔지니어링 (주)경호 (주)동성기술공사 (주)태준엔지니어링" anchor="middle" size={5} />
      <T x={360} y={1361} s="토목" anchor="middle" size={7} />
      <T x={410} y={1361} s="건설단계" anchor="middle" size={7} />
      <T x={465} y={1361} s="실시설계" anchor="middle" size={7} />
      <L p={[385, 1351, 385, 1372]} w={0.5} />
      <L p={[437, 1351, 437, 1372]} w={0.5} />
      {[1304, 1322, 1340, 1358].map((y) => <path key={y} d={pts([522, y - 6, 527, y + 4, 517, y + 4, 522, y - 6])} fill="none" stroke="#333" strokeWidth="0.6" />)}
      <T x={573} y={1340} s="2017. 9" anchor="middle" size={6} />
      <T x={573} y={1351} s="2014. 12" anchor="middle" size={6} />
      <T x={635} y={1340} s="표면설계변경" anchor="middle" size={5.5} />
      <T x={625} y={1351} s="설계종결" anchor="middle" size={5.5} />
      <T x={573} y={1363} s="날짜" anchor="middle" size={5} />
      <T x={690} y={1363} s="내  용" anchor="middle" size={5} />
      <T x={522} y={1363} s="개정번호" anchor="middle" size={4.5} />
      <T x={790} y={1340} s="시공자 검토" anchor="middle" size={5.5} />
      <T x={790} y={1351} s="이용자 이훈덕" anchor="middle" size={5.5} />
      <T x={850} y={1340} s="김부자 정후훈" anchor="middle" size={5.5} />
      <T x={850} y={1351} s="김종국 이재호" anchor="middle" size={5.5} />
      <T x={912} y={1340} s="삼주식 김기도" anchor="middle" size={5.5} />
      <T x={912} y={1351} s="삼주식 박유곤" anchor="middle" size={5.5} />
      {[['설계공구', 1305], ['시공공구', 1324], ['도면축척', 1342], ['도면번호', 1361]].map(([a, b]) => <T key={a as string} x={967} y={b as number} s={a as string} anchor="middle" size={6.5} />)}
      <T x={1017} y={1304} s="제5,6공구" anchor="middle" size={6.5} />
      <T x={1017} y={1323} s="제4공구" anchor="middle" size={6.5} />
      <T x={1093} y={1304} s="C000.00~7340.00" anchor="middle" size={6.5} />
      <T x={1093} y={1323} s="C000.00~7340.00" anchor="middle" size={6.5} />
      <T x={1067} y={1342} s="S=NONE" anchor="middle" size={6.5} />
      <T x={1067} y={1361} s="C0010201-001" anchor="middle" size={6.5} />
      <T x={1165} y={1322} s="도 면 명" anchor="middle" size={6.5} />
      <T x={1165} y={1361} s="관련번호" anchor="middle" size={6.5} />
      <T x={1250} y={1325} s="표준횡단면도(1)" anchor="middle" size={7} />
      <T x={1250} y={1361} s="4.001" anchor="middle" size={6.5} />
    </g>
  );
}

function Preview() {
  return (
    <div className="absolute top-[994px] left-[1405px] flex h-[781px] w-[1470px] flex-col border border-[#222] bg-[#041422] shadow-[6px_8px_10px_rgba(0,0,0,0.35)]">
      <div className="flex h-[28px] items-center justify-end bg-[#f5f2ec] pr-[15px]">
        <svg width="9" height="10" viewBox="0 0 9 10" fill="none" stroke="#8a8a8a"><rect x="0.5" y="2.5" width="6" height="7" /><path d="M2.5 2.5 V0.5 H8.5 V7.5 H6.5" /></svg>
        <svg className="ml-[27px]" width="11" height="11" viewBox="0 0 11 11" stroke="#6a6a6a"><path d="M1 1 L10 10 M10 1 L1 10" /></svg>
      </div>
      <div className="relative flex-1">
        <svg className="block" width="1468" height="751" viewBox="1406 1023 1468 751">
          <defs>
            <pattern id="hatch" width="4" height="4" patternUnits="userSpaceOnUse" patternTransform="rotate(45)">
              <rect width="4" height="4" fill="#f4f4f4" />
              <line x1="0" y1="0" x2="0" y2="4" stroke="#b5b5b5" strokeWidth="1.4" />
            </pattern>
            <marker id="arr" markerWidth="7" markerHeight="7" refX="0" refY="3.5" orient="auto-start-reverse"><path d="M0 3.5 L7 0.5 V6.5 Z" fill="#c9d0d3" /></marker>
          </defs>
          <rect x="1811" y="1077" width="928" height="644" fill="url(#hatch)" />
          <rect x="1824" y="1088" width="901" height="622" fill="#fff" />
          <rect x="1839" y="1098" width="878" height="602" fill="#fff" stroke="#111" strokeWidth="2" />
          <Drawing />
          <path d="M1811 1059 V1071 M2739 1059 V1071" stroke="#c9d0d3" />
          <path d="M1817 1065 H2733" stroke="#c9d0d3" markerStart="url(#arr)" markerEnd="url(#arr)" />
          <text x="2275" y="1062" textAnchor="middle" fontSize="14" fill="#dfe4e6">420 mm</text>
          <path d="M2744 1077 H2756 M2744 1721 H2756" stroke="#c9d0d3" />
          <path d="M2750 1083 V1715" stroke="#c9d0d3" markerStart="url(#arr)" markerEnd="url(#arr)" />
          <text x="2762" y="1405" fontSize="14" fill="#dfe4e6">297 mm</text>
          <text x="1789" y="1696" fontSize="13" fill="#dfe4e6">mm</text>
          <path d="M1800 1701 V1710 M1796 1707 L1800 1711 L1804 1707 M1796 1713 H1804 M1796 1723 H1804 M1800 1732 V1724 M1796 1727 L1800 1723 L1804 1727" stroke="#c9d0d3" fill="none" />
          <path d="M1800 1733 H1808 M1806 1726 V1736 M1823 1733 H1829 M1821 1726 V1736 M1822 1733 L1826 1730 M1822 1733 L1826 1736" stroke="#c9d0d3" fill="none" />
          <text x="1844" y="1738" fontSize="14" fill="#e41b1b">-5.12</text>
          <text x="1885" y="1738" fontSize="14" fill="#dfe4e6">mm</text>
        </svg>
        <div className="absolute top-[716px] left-[812px] flex items-center text-[14px] text-[#dfe4e6]">
          <span className="flex h-[23px] w-[25px] items-center justify-center rounded-full bg-[#fdfdfd]"><svg width="8" height="12" viewBox="0 0 8 12"><path d="M6.5 1 L1.5 6 L6.5 11" fill="none" stroke="#444" strokeWidth="1.4" /></svg></span>
          <span className="ml-[13px] text-[#e41b1b]">1</span>
          <span className="ml-[7px]">/</span>
          <span className="ml-[6px]">12</span>
          <span className="ml-[9px] flex h-[23px] w-[25px] items-center justify-center rounded-full bg-[#fdfdfd]"><svg width="8" height="12" viewBox="0 0 8 12"><path d="M1.5 1 L6.5 6 L1.5 11" fill="none" stroke="#444" strokeWidth="1.4" /></svg></span>
        </div>
      </div>
    </div>
  );
}

export default function App() {
  return (
    <div className="relative h-[1800px] w-[2900px] overflow-hidden bg-white font-['Noto_Sans_CJK_KR',sans-serif]">
      <Strip cls="top-[163px] border-[#232323] bg-[#e7e2df] tracking-[0.5px]" txt="text-[#1a1a1a]" boxColor="#d3121a" text="C0021001-014-평면 및 종단면도(14)" />
      <Strip cls={`top-[211px] border-[#232323] font-bold tracking-[1.5px] ${ORANGE}`} txt="text-white" boxColor="#ffffff" text="C0021001-011-평면 및 종단면도(11)" />
      <Strip cls="top-[260px] border-[#232323] bg-[#979a93] tracking-[0.5px]" txt="text-[#1a1a1a]" boxColor="#b5161c" text="C0025001-002-횡단면도(2)" />

      <div className="absolute top-[308px] left-[90px] flex h-[1160px] w-[2172px] border-[3px] border-[#141414] shadow-[4px_8px_10px_rgba(0,0,0,0.4)]">
        <Sidebar />
        <Main />
      </div>

      <CheckColumn />
      <HighlightBox />
      <Preview />
      <PrintPanel />
    </div>
  );
}
